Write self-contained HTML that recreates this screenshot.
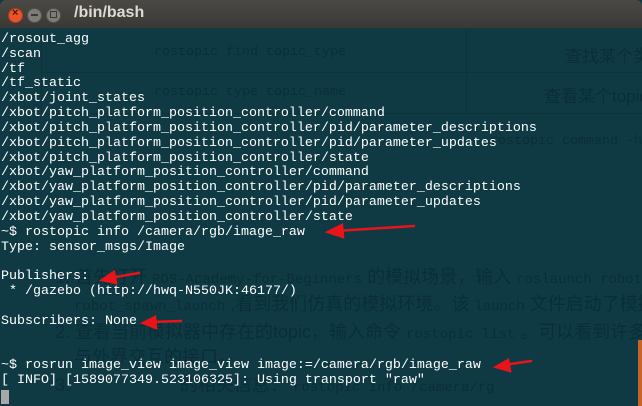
<!DOCTYPE html><html><head><style>
body{margin:0;width:642px;height:406px;overflow:hidden;background:#0f3a44;position:relative;font-family:"Liberation Mono",monospace}
.wrap{position:absolute;left:0;top:0;width:642px;height:406px;overflow:hidden}
.tb{position:absolute;left:0;top:0;width:642px;height:28px;background:linear-gradient(#4a4945,#3a3935);border-radius:6px 6px 0 0}
.b{position:absolute;top:8px;width:13px;height:13px;border-radius:50%;background:#7d7c78;border:1px solid #55544f}
.t{position:absolute;left:74px;top:4px;color:#dfdbd2;font:bold 16px "Liberation Sans",sans-serif}
.term{position:absolute;left:1px;top:33px;color:#fff;font-size:13.33px;line-height:14.83px;white-space:pre}
.g{position:absolute;right:0;overflow:hidden;color:#0a2e37;font-size:13.33px;white-space:pre}
.gc{position:absolute;right:0;overflow:hidden;color:#0a2e37;font:18px "Liberation Sans","Noto Sans CJK SC",sans-serif;white-space:pre}
.gc span{font:14px "Liberation Mono",monospace}
</style></head><body><div class="wrap">
<div class="g" style="left:154px;top:45px">rostopic find topic_type</div>
<div class="g" style="left:154px;top:85px">rostopic type topic_name</div>
<div class="gc" style="left:565px;top:42px;font-size:17px">查找某个类</div>
<div class="gc" style="left:544px;top:82px;font-size:17px">查看某个topic</div>
<div style="position:absolute;left:41px;top:72px;width:601px;height:1px;background:#0c333c"></div>
<div style="position:absolute;left:41px;top:113px;width:601px;height:1px;background:#0c333c"></div>
<div style="position:absolute;left:41px;top:30px;width:1px;height:84px;background:#0c333c"></div>
<div style="position:absolute;left:466px;top:30px;width:1px;height:84px;background:#0c333c"></div>
<div class="g" style="left:490px;top:134px">rostopic command -h</div>
<div class="gc" style="left:55px;top:263px">1. 首先打开 <span>ROS-Academy-for-Beginners</span> 的模拟场景，输入 <span>roslaunch robot_s</span></div>
<div class="gc" style="left:74px;top:290px"><span>robot_spawn_launch</span> ,看到我们仿真的模拟环境。该 <span>launch</span> 文件启动了模拟场</div>
<div class="gc" style="left:55px;top:318px">2. 查看当前模拟器中存在的topic，输入命令 <span>rostopic list</span> 。可以看到许多topic</div>
<div class="gc" style="left:74px;top:343px">与外界交互的接口。</div>
<div class="gc" style="left:55px;top:371px">3.                      的相关信息： <span>rostopic info /camera/rg</span></div>
<div style="position:absolute;left:638px;top:340px;width:4px;height:66px;background:#c8632a"></div>
<div class="tb"></div>
<div class="b" style="left:8px;background:#e9542b;border-color:#b23a18"></div>
<div class="b" style="left:27px"></div>
<div class="b" style="left:46px"></div>
<div style="position:absolute;left:12px;top:7px;color:#4a1a0a;font:bold 11px sans-serif">×</div>
<div style="position:absolute;left:31px;top:14px;width:7px;height:2px;background:#3a3935"></div>
<div style="position:absolute;left:50px;top:11px;width:5px;height:5px;border:1px solid #3a3935"></div>
<div class="t">/bin/bash</div>
<div class="term">/rosout_agg
/scan
/tf
/tf_static
/xbot/joint_states
/xbot/pitch_platform_position_controller/command
/xbot/pitch_platform_position_controller/pid/parameter_descriptions
/xbot/pitch_platform_position_controller/pid/parameter_updates
/xbot/pitch_platform_position_controller/state
/xbot/yaw_platform_position_controller/command
/xbot/yaw_platform_position_controller/pid/parameter_descriptions
/xbot/yaw_platform_position_controller/pid/parameter_updates
/xbot/yaw_platform_position_controller/state
~$ rostopic info /camera/rgb/image_raw
Type: sensor_msgs/Image

Publishers:
 * /gazebo (http://hwq-N550JK:46177/)

Subscribers: None


~$ rosrun image_view image_view image:=/camera/rgb/image_raw
[ INFO] [1589077349.523106325]: Using transport "raw"
</div>
<div style="position:absolute;left:1px;top:390px;width:8px;height:14px;background:#a8a8a8"></div>
<svg style="position:absolute;left:0;top:0" width="642" height="406">
<g stroke="#e8141a" stroke-width="2.5" stroke-linecap="round" fill="#e8141a">
<line x1="414" y1="226" x2="336" y2="231"/><polygon points="328,232 342,225 343,237"/>
<line x1="139" y1="273" x2="110" y2="278"/><polygon points="102,280 114,272 116,283"/>
<line x1="181" y1="321" x2="151" y2="322"/><polygon points="143,323 155,317 156,328"/>
<line x1="531" y1="361" x2="504" y2="365"/><polygon points="496,367 508,360 510,371"/>
</g></svg>
</div></body></html>
